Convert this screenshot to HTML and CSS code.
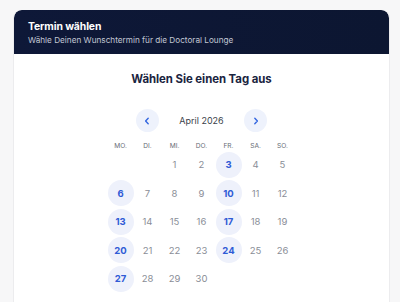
FILE: index.html
```html
<!DOCTYPE html>
<html lang="de">
<head>
<meta charset="utf-8">
<link rel="stylesheet" href="styles.css">
</head>
<body>
<div class="card">
  <div class="header">
    <div class="title">Termin wählen</div>
    <div class="subtitle">Wähle Deinen Wunschtermin für die Doctoral Lounge</div>
  </div>
  <div class="body">
    <h2 class="heading">Wählen Sie einen Tag aus</h2>
    <div class="month-nav">
      <button class="nav-btn" aria-label="Vorheriger Monat">
        <svg width="10" height="10" viewBox="0 0 10 10"><path d="M6.2 2.2 L3.6 5 L6.2 7.8" fill="none" stroke="#3467e0" stroke-width="1.4" stroke-linecap="round" stroke-linejoin="round"/></svg>
      </button>
      <div class="month">April 2026</div>
      <button class="nav-btn" aria-label="Nächster Monat">
        <svg width="10" height="10" viewBox="0 0 10 10"><path d="M3.8 2.2 L6.4 5 L3.8 7.8" fill="none" stroke="#3467e0" stroke-width="1.4" stroke-linecap="round" stroke-linejoin="round"/></svg>
      </button>
    </div>
    <div class="grid">
      <div class="wd">MO.</div><div class="wd">DI.</div><div class="wd">MI.</div><div class="wd">DO.</div><div class="wd">FR.</div><div class="wd">SA.</div><div class="wd">SO.</div>
      <div class="day empty"></div><div class="day empty"></div>
      <div class="day">1</div><div class="day">2</div><div class="day avail">3</div><div class="day">4</div><div class="day">5</div>
      <div class="day avail">6</div><div class="day">7</div><div class="day">8</div><div class="day">9</div><div class="day avail">10</div><div class="day">11</div><div class="day">12</div>
      <div class="day avail">13</div><div class="day">14</div><div class="day">15</div><div class="day">16</div><div class="day avail">17</div><div class="day">18</div><div class="day">19</div>
      <div class="day avail">20</div><div class="day">21</div><div class="day">22</div><div class="day">23</div><div class="day avail">24</div><div class="day">25</div><div class="day">26</div>
      <div class="day avail">27</div><div class="day">28</div><div class="day">29</div><div class="day">30</div>
    </div>
  </div>
</div>
</body>
</html>
```

FILE: styles.css
```css
* { box-sizing: border-box; }
html, body { margin: 0; padding: 0; }
body {
  background: #f7f7f8;
  font-family: Inter, "Noto Sans", sans-serif;
  height: 302px;
  overflow: hidden;
}
.card {
  margin: 10px 0 0 13px;
  width: 377px;
  background: #ffffff;
  border-radius: 8px 8px 0 0;
  border: 1px solid #ececee;
  border-top: none;
  overflow: hidden;
  height: 320px;
}
.header {
  height: 44px;
  background: linear-gradient(90deg, #0e1838 0%, #0c1631 100%);
  padding: 10px 14px 0;
  border-radius: 8px 8px 0 0;
}
.title {
  color: #ffffff;
  font-size: 10.4px;
  font-weight: 700;
  line-height: 13px;
  letter-spacing: -0.1px;
}
.subtitle {
  color: #c2c7d4;
  font-size: 8.2px;
  line-height: 12px;
  margin-top: 1px;
}
.body {
  display: flex;
  flex-direction: column;
  align-items: center;
  padding-top: 17px;
}
.heading {
  margin: 0;
  font-size: 11.4px;
  font-weight: 700;
  color: #1a2440;
  line-height: 16px;
  letter-spacing: -0.05px;
}
.month-nav {
  display: flex;
  align-items: center;
  justify-content: space-between;
  width: 132px;
  margin-top: 22px;
}
.nav-btn {
  width: 23px;
  height: 23px;
  border-radius: 50%;
  border: none;
  background: #eef2fc;
  display: flex;
  align-items: center;
  justify-content: center;
  padding: 0;
}
.month {
  font-size: 9px;
  color: #3a3f4a;
}
.grid {
  display: grid;
  grid-template-columns: repeat(7, 27px);
  grid-template-rows: 6px;
  grid-auto-rows: 26px;
  row-gap: 2.5px;
  margin-top: 11px;
}
.wd {
  grid-row: 1;
  height: 6px;
  font-size: 6.6px;
  color: #676c76;
  text-align: center;
  line-height: 6px;
}
.day {
  width: 26px;
  height: 26px;
  justify-self: center;
  display: flex;
  align-items: center;
  justify-content: center;
  font-size: 9.5px;
  color: #8a8e97;
  border-radius: 50%;
}
.day.avail {
  background: #eef1fb;
  color: #2f5bd6;
  font-weight: 700;
}
```
